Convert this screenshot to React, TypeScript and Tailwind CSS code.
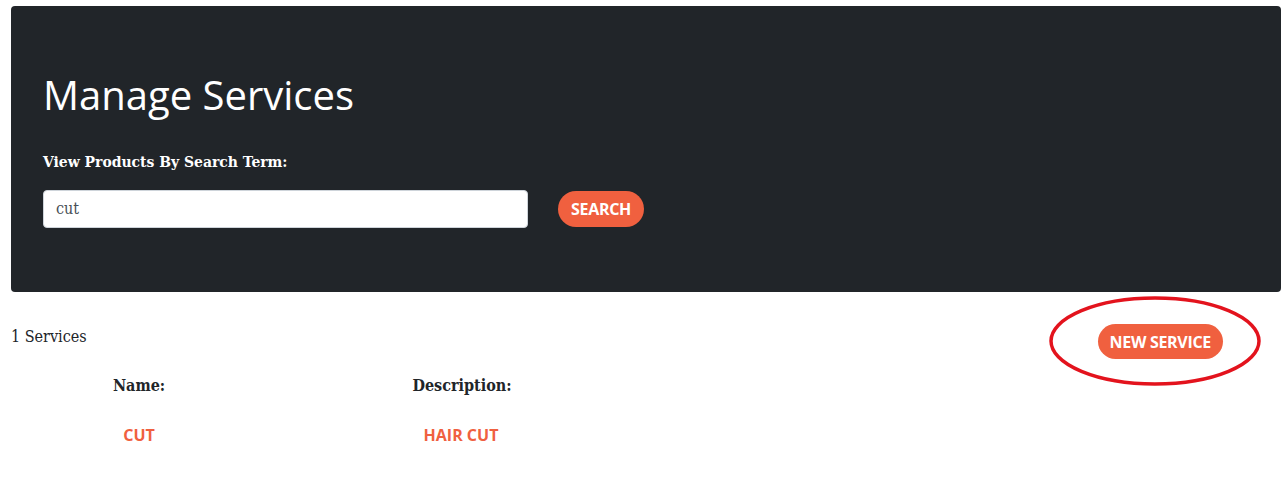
import React from "react";

const serif: React.CSSProperties = {
  fontFamily: '"DejaVu Serif Condensed", "DejaVu Serif", serif',
  fontStretch: "condensed",
};
const sans: React.CSSProperties = { fontFamily: '"Open Sans", sans-serif', fontStretch: "normal" };

export default function App() {
  return (
    <div className="w-[1285px] h-[484px] bg-white overflow-hidden" style={serif}>
      <div className="pt-[6px] pl-[11px] pr-[4px]">
        <div className="h-[286px] bg-[#212529] rounded-[4px] pl-[32px] pt-[64px]">
          <h1 className="text-[40px] leading-[50px] text-white font-normal" style={sans}>
            Manage Services
          </h1>
          <div className="mt-[31px] text-[15.5px] leading-[22px] text-white font-bold">View Products By Search Term:</div>
          <div className="mt-[17px] flex items-center gap-[30px]">
            <div className="w-[485px] h-[38px] bg-white rounded-[4px] border border-[#ced4da] flex items-center pl-[12px] text-[16px] text-[#495057]">
              cut
            </div>
            <button
              className="h-[36px] px-[13px] rounded-full bg-[#f0603f] text-white text-[16px] font-bold tracking-[-0.3px]"
              style={sans}
            >
              SEARCH
            </button>
          </div>
        </div>
      </div>
      <div className="relative pl-[11px]">
        <div className="flex justify-between items-start">
          <div className="mt-[34px] text-[16px] leading-[22px] text-[#212529]">1 Services</div>
          <div className="relative mt-[32px] mr-[62px]">
            <button
              className="h-[35px] px-[12px] rounded-full bg-[#f0603f] text-white text-[16px] font-bold tracking-[-0.3px]"
              style={sans}
            >
              NEW SERVICE
            </button>
            <svg className="absolute left-[-50px] top-[-29px]" width="214" height="92" viewBox="0 0 214 92">
              <ellipse cx="107" cy="46" rx="104" ry="43" fill="none" stroke="#e3131d" strokeWidth="3.5" />
            </svg>
          </div>
        </div>
        <div className="grid grid-cols-[256px_388px] mt-[16px] text-[#212529]">
          <div className="text-center text-[16px] leading-[22px] font-bold">Name:</div>
          <div className="text-center text-[16px] leading-[22px] font-bold pl-[2px]">Description:</div>
          <div className="mt-[27px] text-center text-[16px] leading-[22px] font-bold text-[#f0603f]" style={sans}>CUT</div>
          <div className="mt-[27px] text-center text-[16px] leading-[22px] font-bold text-[#f0603f]" style={sans}>HAIR CUT</div>
        </div>
      </div>
    </div>
  );
}
